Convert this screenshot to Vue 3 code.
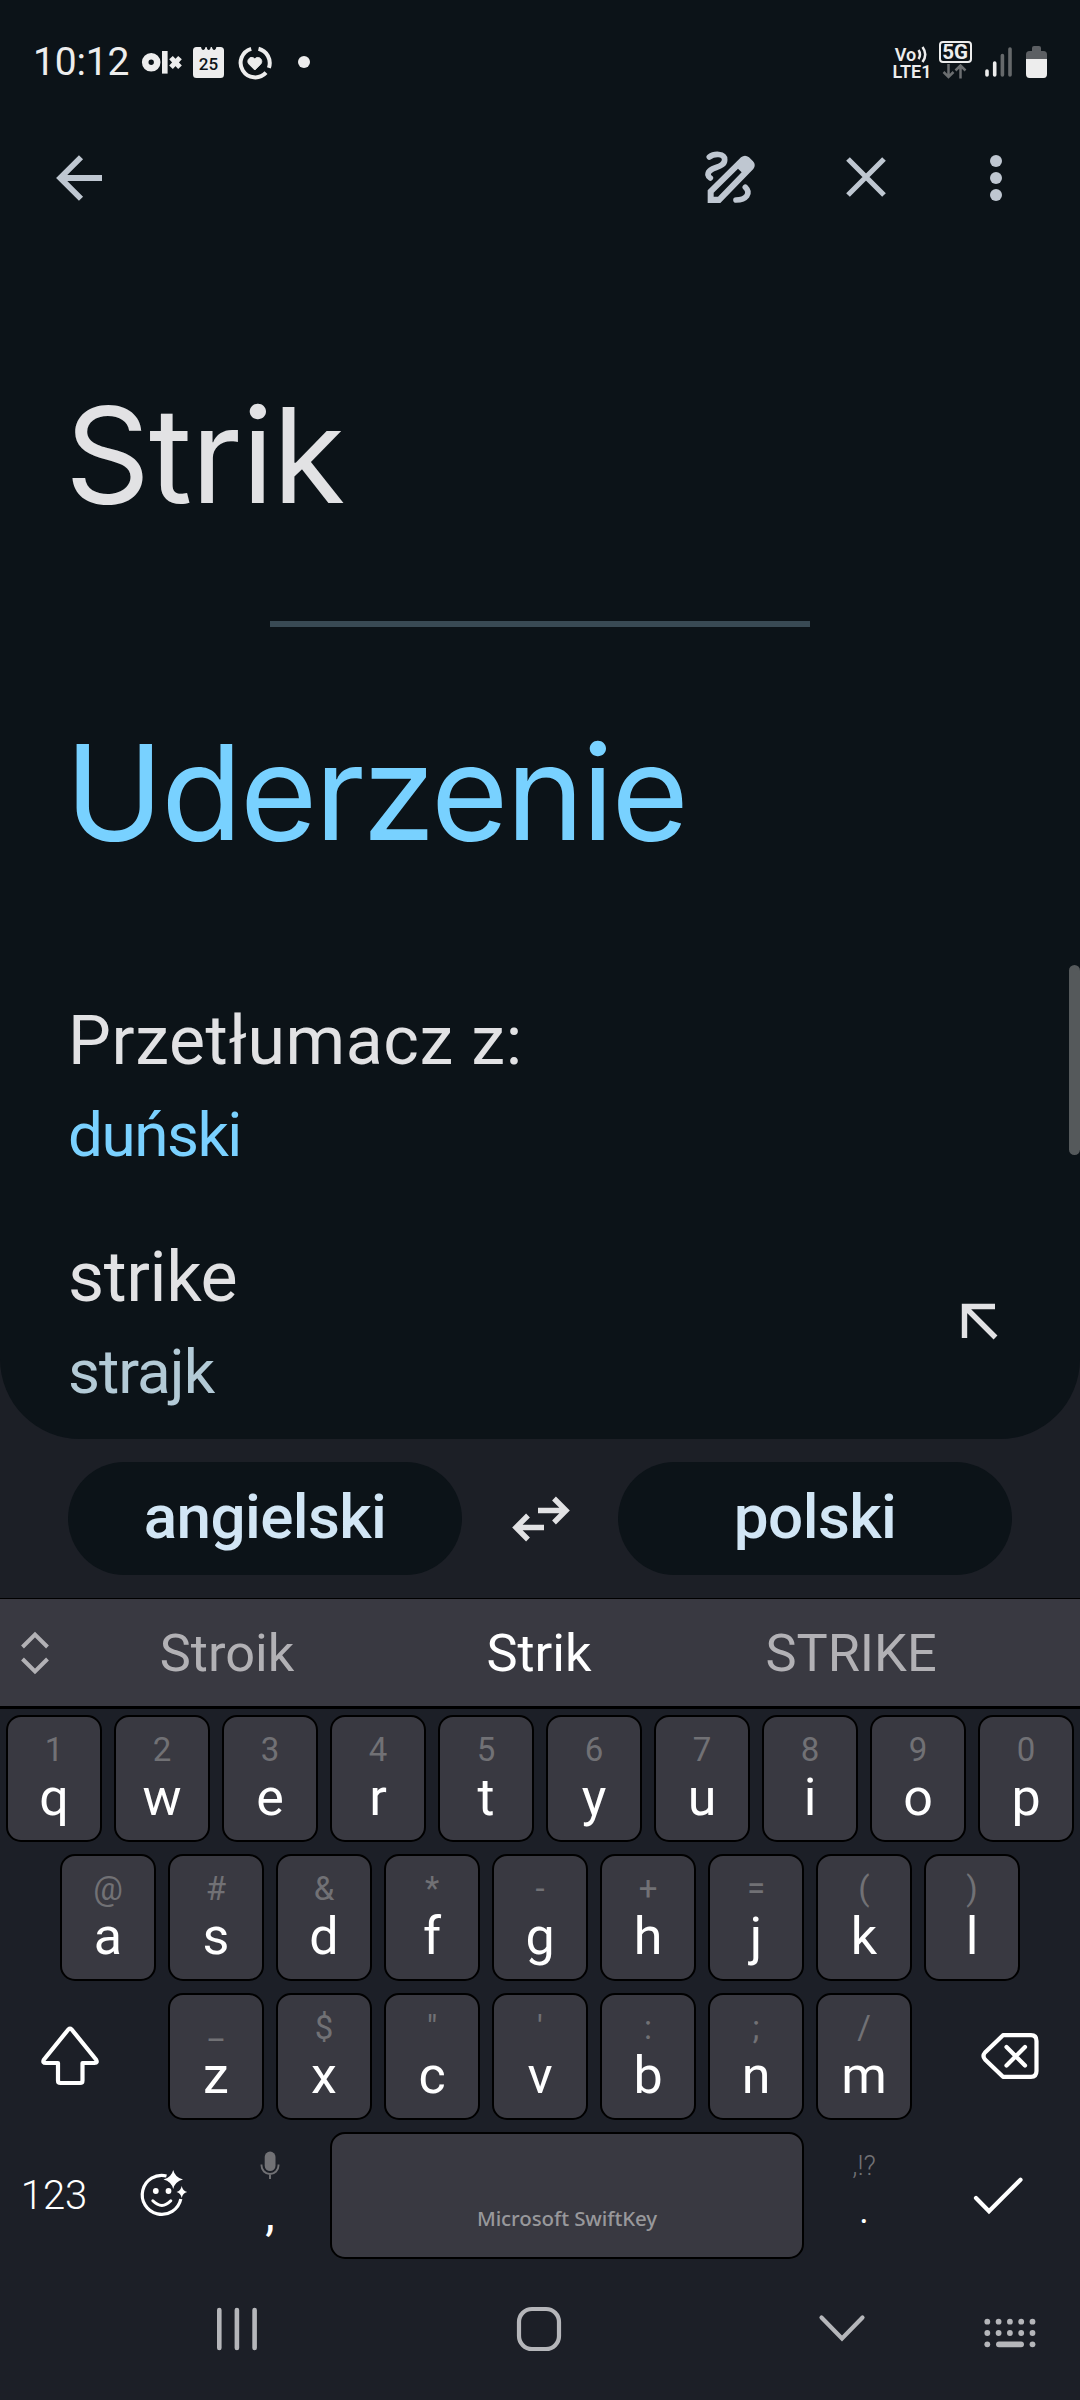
<script setup>
const rows = [
  [['1', 'q'], ['2', 'w'], ['3', 'e'], ['4', 'r'], ['5', 't'], ['6', 'y'], ['7', 'u'], ['8', 'i'], ['9', 'o'], ['0', 'p']],
  [['@', 'a'], ['#', 's'], ['&', 'd'], ['*', 'f'], ['-', 'g'], ['+', 'h'], ['=', 'j'], ['(', 'k'], [')', 'l']],
]
const lastRow = [['_', 'z'], ['$', 'x'], ['"', 'c'], ["'", 'v'], [':', 'b'], [';', 'n'], ['/', 'm']]
const dots = [0, 1, 2, 3, 4]
</script>

<template>
  <div class="screen">
    <main class="panel">
      <header class="status">
        <span class="time">10:12</span>
        <svg class="olx" width="42" height="26" viewBox="141 49 42 26">
          <circle cx="151.2" cy="62.3" r="6" fill="none" stroke="#ededed" stroke-width="6.6" />
          <rect x="162" y="51" width="5.6" height="22.6" fill="#ededed" />
          <path d="M171 57.600l9 9.600m0-9.600l-9 9.600" stroke="#ededed" stroke-width="5" />
        </svg>
        <div class="calendar">
          <svg width="31" height="31" viewBox="0 0 31 31">
            <path d="M3.500 0H8l.6 2q1.600 2.200 3.200 0L12.600 0h1l.6 2q1.500 2.200 3 0l.6-2h1l.8 2q1.500 2.200 3.100 0l.7-2h4.100Q31 0 31 3.500V27.500Q31 31 27.500 31h-24Q0 31 0 27.500V3.500Q0 0 3.500 0z" fill="#ededed" />
          </svg>
          <span>25</span>
        </div>
        <svg class="ring" width="36" height="36" viewBox="237.500 44.500 36 36">
          <path d="M251.700 48.300A14.600 14.600 0 1 0 266.500 72.200M259 48.300A14.600 14.600 0 0 1 269.400 67.300" fill="none" stroke="#ededed" stroke-width="4" />
          <path d="M255.300 69.500l-5.800-5.800c-3.500-3.700 1.700-9.500 5.800-5.300 4.100-4.200 9.300 1.600 5.800 5.300z" fill="#ededed" stroke="#ededed" />
        </svg>
        <svg class="more-dot" width="14" height="14" viewBox="0 0 14 14"><circle cx="7" cy="7" r="6" fill="#ededed" /></svg>
        <span class="grow"></span>
        <div class="volte">
          <div class="vo">Vo<svg width="11" height="17" viewBox="0 0 11 17"><path d="M1.500 4q3 4.500 0 9M5.500 1q5.500 7.500 0 15" fill="none" stroke="#ededed" stroke-width="2.500" /></svg></div>
          <div class="lte">LTE1</div>
        </div>
        <div class="net">
          <div class="five">5G</div>
          <svg width="26" height="15" viewBox="0 0 26 15"><path d="M6.500 0v12.500M1.500 8l5 5 5-5M18.500 14.500V2M13.500 6.500l5-5 5 5" fill="none" stroke="#6b6e70" stroke-width="2.500" /></svg>
        </div>
        <svg class="signal" width="28" height="30" viewBox="985 47 28 30">
          <g stroke-width="3.600" stroke-linecap="round">
            <path d="M987 71v4M994.700 63v12" stroke="#ededed" />
            <path d="M1002.400 55.500v19.500M1010 49v26" stroke="#66696b" />
          </g>
        </svg>
        <svg width="21" height="32" viewBox="0 0 21 32">
          <path d="M6 5V2Q6 0 8 0h5q2 0 2 2v3h2.500Q21 5 21 8.500V13H0V8.500Q0 5 3.500 5z" fill="#5c5f63" />
          <path d="M0 13h21v15q0 4-3.500 4h-14Q0 32 0 28z" fill="#ededed" />
        </svg>
      </header>

      <nav class="appbar">
        <svg width="52" height="52" viewBox="54 152 52 52">
          <path d="M102 178H61M81 157.200L60.200 178 81 198.800" fill="none" stroke="#bfc7d1" stroke-width="5.800" />
        </svg>
        <span class="grow"></span>
        <svg class="pen" width="54" height="54" viewBox="130 390 162 162">
          <path fill="#bfc7d1" fill-rule="evenodd" d="M141 549V511L241 412Q253 402 265 412L277 424Q287 435 278 447L179 549zM159 530H172L243 457L232 446L159 518z" />
          <path d="M146 411C160 400 192 399 192 419C192 447 142 438 142 464Q143 470 149 474" fill="none" stroke="#bfc7d1" stroke-width="17" stroke-linecap="round" />
          <path d="M254 502C272 520 257 540 226 540" fill="none" stroke="#bfc7d1" stroke-width="17" stroke-linecap="round" />
        </svg>
        <svg class="close" width="44" height="44" viewBox="0 0 44 44"><path d="M4 4l36 36M40 4L4 40" stroke="#bfc7d1" stroke-width="5.200" /></svg>
        <svg width="16" height="50" viewBox="0 0 16 50"><g fill="#bfc7d1"><circle cx="8" cy="8" r="6" /><circle cx="8" cy="25" r="6" /><circle cx="8" cy="42" r="6" /></g></svg>
      </nav>

      <h1 class="source">Strik</h1>
      <div class="rule"></div>
      <h1 class="result">Uderzenie</h1>

      <div class="label">Przetłumacz z:</div>
      <div class="detected">duński</div>
      <div class="suggestion">
        <div>
          <div class="word">strike</div>
          <div class="meaning">strajk</div>
        </div>
        <svg width="38" height="38" viewBox="0 0 38 38"><path d="M4.500 36V4.500H35M5 5l30.500 30.500" fill="none" stroke="#e2e2e4" stroke-width="5.400" /></svg>
      </div>
      <i class="thumb"></i>
    </main>

    <section class="langs">
      <button class="pill from">angielski</button>
      <svg width="60" height="50" viewBox="510 1494 60 50">
        <g fill="none" stroke="#e2e2e4" stroke-width="5.400">
          <path d="M538 1510.500H565M554 1498.500l12 12-12 12" />
          <path d="M544 1527.500H517M528 1515.500l-12 12 12 12" />
        </g>
      </svg>
      <button class="pill to">polski</button>
    </section>

    <section class="candidates">
      <svg width="32" height="44" viewBox="0 0 32 44"><path d="M3.500 16L16 3.500 28.500 16M3.500 28L16 40.500 28.500 28" fill="none" stroke="#b2b1b5" stroke-width="4" /></svg>
      <span>Stroik</span><span class="main">Strik</span><span>STRIKE</span>
    </section>

    <section class="keyboard">
      <div v-for="(row, i) in rows" :key="i" class="row">
        <div v-for="k in row" :key="k[1]" class="key"><span class="hint">{{ k[0] }}</span><span class="char">{{ k[1] }}</span></div>
      </div>
      <div class="row third">
        <svg class="shift" width="62" height="62" viewBox="39 2025 62 62">
          <path d="M68.300 2029.500Q70 2028 71.700 2029.500L96 2059.500Q98 2063 94.500 2063H82.500V2080.500Q82.500 2083 80 2083H60.500Q58 2083 58 2080.500V2063H46Q42 2063 44 2059.500Z" fill="none" stroke="#fff" stroke-width="4.200" stroke-linejoin="round" />
        </svg>
        <div class="keys">
          <div v-for="k in lastRow" :key="k[1]" class="key"><span class="hint">{{ k[0] }}</span><span class="char">{{ k[1] }}</span></div>
        </div>
        <svg class="erase" width="60" height="50" viewBox="980 2031 60 50">
          <path d="M1003 2035.200H1031Q1036.500 2035.200 1036.500 2041V2071Q1036.500 2076.800 1031 2076.800H1003L985 2059.500Q982 2056 985 2052.500Z" fill="none" stroke="#fff" stroke-width="4.200" stroke-linejoin="round" />
          <path d="M1006.500 2047l18.500 18.500M1025 2047l-18.500 18.500" stroke="#fff" stroke-width="4.200" stroke-linecap="round" />
        </svg>
      </div>
      <div class="row bottom">
        <div class="num">123</div>
        <svg class="emoji" width="50" height="50" viewBox="139 2169 50 50">
          <path d="M166.500 2176A19.500 19.500 0 1 0 180.800 2199" fill="none" stroke="#fff" stroke-width="3.200" />
          <circle cx="155.800" cy="2191" r="2.900" fill="#fff" /><circle cx="168.500" cy="2191" r="2.900" fill="#fff" />
          <path d="M152.800 2200.800Q162 2210 170.800 2200.800" fill="none" stroke="#fff" stroke-width="3" stroke-linecap="round" />
          <path d="M173.200 2170Q175 2177.500 183 2179.500Q175 2181.500 173.200 2189Q171.400 2181.500 163.500 2179.500Q171.400 2177.500 173.200 2170ZM181.700 2186Q182.700 2191 187.200 2192Q182.700 2193 181.700 2198Q180.700 2193 176.500 2192Q180.700 2191 181.700 2186Z" fill="#fff" />
        </svg>
        <div class="comma">
          <svg width="20" height="28" viewBox="260 2151 20 28">
            <rect x="264.700" y="2151.600" width="10.800" height="19.500" rx="5.400" fill="#717175" />
            <path d="M261.500 2164.500v1a8.500 8.500 0 0 0 17 0v-1M270 2174v5" fill="none" stroke="#717175" stroke-width="1.900" />
          </svg>
          <span>,</span>
        </div>
        <div class="space">Microsoft SwiftKey</div>
        <div class="period"><small>,!?</small><span>.</span></div>
        <svg class="check" width="54" height="42" viewBox="972 2176 54 42"><path d="M976 2199l13 13.200 31.500-31.500" fill="none" stroke="#fff" stroke-width="4.200" stroke-linecap="round" /></svg>
      </div>
    </section>

    <footer class="navbar">
      <svg class="recents" width="42" height="44" viewBox="216 2307 42 44"><path d="M219.300 2310v38M236.900 2310v38M254.600 2310v38" stroke="#b5b6ba" stroke-width="4.600" stroke-linecap="round" /></svg>
      <svg class="home" width="46" height="46" viewBox="0 0 46 46"><rect x="3" y="3" width="40" height="40" rx="13" fill="none" stroke="#b5b6ba" stroke-width="4.200" /></svg>
      <svg class="down" width="50" height="30" viewBox="817 2313 50 30"><path d="M821.500 2317.500l20.500 21 20.500-21" fill="none" stroke="#b5b6ba" stroke-width="4.200" stroke-linecap="round" /></svg>
      <svg class="kb" width="54" height="32" viewBox="983 2317 54 32">
        <g fill="#b5b6ba">
          <template v-for="d in dots" :key="d">
            <circle :cx="987.300 + d * 11.300" cy="2321.700" r="2.900" />
            <circle :cx="987.300 + d * 11.300" cy="2333" r="2.900" />
          </template>
          <circle cx="987.300" cy="2344.300" r="2.900" /><circle cx="1032.500" cy="2344.300" r="2.900" />
          <rect x="996" y="2341.400" width="28" height="5.800" rx="2.900" />
        </g>
      </svg>
    </footer>
  </div>
</template>

<style>
body { margin: 0; background: #1c1f27; }
</style>

<style scoped>
.screen {
  width: 1080px;
  height: 2400px;
  overflow: hidden;
  background: #1c1f26;
  font-family: Roboto, "Noto Sans", sans-serif;
  color: #e2e2e4;
}
svg { display: block; flex: none; }
.grow { flex: 1; }
.panel {
  position: relative;
  box-sizing: border-box;
  height: 1439px;
  background: #0c1318;
  border-radius: 0 0 80px 80px;
}
.status {
  display: flex;
  align-items: center;
  box-sizing: border-box;
  height: 123px;
  padding: 0 33px 0 33px;
  color: #ededed;
}
.time { width: 108px; font-size: 39px; line-height: 46px; letter-spacing: -0.2px; white-space: nowrap; }
.calendar { position: relative; margin-left: 10px; margin-top: 2px; }
.calendar span { position: absolute; left: 0; top: 7px; width: 31px; text-align: center; font-size: 17px; line-height: 20px; font-weight: 500; color: #0c1318; }
.ring { margin-left: 13px; margin-top: 2px; }
.more-dot { margin-left: 24px; margin-top: 1px; }
.volte { width: 40px; margin-top: 2px; font-weight: 600; font-size: 18px; line-height: 17px; text-align: center; }
.vo { display: flex; justify-content: center; gap: 1px; padding-right: 1px; height: 17px; }
.net { display: flex; flex-direction: column; align-items: center; width: 34px; margin: 0 13px 0 6px; padding-bottom: 3px; }
.five { box-sizing: border-box; width: 33px; height: 22px; border: 2px solid #ededed; border-radius: 4px; font-size: 20.500px; line-height: 19px; font-weight: 700; text-align: center; }
.net svg { margin-top: 1px; }
.signal { margin-right: 13px; }
.appbar { display: flex; align-items: center; height: 110px; padding: 0 76px 0 54px; }
.close { margin: 0 100px 2px 86px; }
.pen { margin-bottom: 2px; }
h1 { margin: 0 0 0 65px; font: 400 132.500px/160px Inter, Roboto, sans-serif; }
.source { margin-top: 142px; letter-spacing: -1.200px; }
.rule { width: 540px; height: 6px; margin: 86px auto 85px; background: #394a54; }
.result { color: #78d1ff; letter-spacing: -2.400px; }
.label { margin: 129px 0 0 68px; font-size: 68px; line-height: 80px; letter-spacing: 0.600px; }
.detected { margin: 14px 0 0 68px; font-size: 62px; line-height: 80px; color: #7ad1ff; letter-spacing: -1.500px; }
.suggestion { display: flex; justify-content: space-between; align-items: center; margin: 62px 82px 0 68px; }
.suggestion svg { margin-bottom: 7px; }
.word { font-size: 70px; line-height: 80px; letter-spacing: -0.400px; }
.meaning { margin-top: 15px; font-size: 62px; line-height: 80px; color: #b3cad6; letter-spacing: -1px; }
.thumb { position: absolute; right: 0; top: 965px; width: 11px; height: 190px; border-radius: 6px; background: #55595b; }
.langs { display: flex; justify-content: space-between; align-items: center; box-sizing: border-box; height: 159px; padding: 0 68px; }
.pill { width: 394px; height: 113px; padding: 0 0 3px; border: 0; border-radius: 57px; background: #0c1318; color: #d2e6f5; font: 500 62px/80px Roboto, sans-serif; letter-spacing: -0.600px; }
.candidates { display: flex; align-items: center; box-sizing: border-box; height: 111px; padding: 1px 0 0 19px; border-top: 1px solid #000; border-bottom: 3px solid #000; background: #393941; color: #b2b1b5; font-size: 52.300px; line-height: 60px; }
.candidates span { width: 312px; text-align: center; }
.candidates svg + span { margin-left: 20px; }
.candidates .main { color: #fff; }
.keyboard { background: #1c1f27; }
.row { display: flex; justify-content: center; height: 139px; }
.key { display: flex; flex-direction: column; align-items: center; box-sizing: border-box; width: 96px; height: 127px; margin: 6px; padding-top: 13px; border: 2px solid #000; border-radius: 15px; background: #393941; }
.hint { font-size: 33px; line-height: 40px; color: #717175; }
.char { font-size: 52px; line-height: 55px; color: #fff; }
.third { align-items: center; justify-content: space-between; }
.keys { display: flex; width: 756px; margin-left: 61px; }
.shift { margin-left: 39px; margin-bottom: 1px; }
.erase { margin-left: auto; margin-right: 40px; margin-bottom: 2px; }
.bottom { display: grid; grid-template-columns: 108px 108px 108px 486px 108px 162px; align-items: center; justify-items: center; color: #fff; }
.num { font-size: 40px; line-height: 48px; font-weight: 300; padding-top: 1px; }
.emoji { margin-left: 4px; margin-bottom: 3px; }
.comma, .period { display: flex; flex-direction: column; align-items: center; height: 127px; }
.comma svg { margin-top: 19px; }
.comma span { font-size: 48px; line-height: 54px; margin-top: 8px; font-weight: 400; }
.period small { margin-top: 16px; font-size: 27px; line-height: 36px; font-weight: 300; color: #717175; }
.period span { margin-top: 9px; font-size: 36px; line-height: 36px; font-weight: 400; }
.space { display: flex; justify-content: center; align-items: flex-end; box-sizing: border-box; width: 474px; height: 127px; padding-bottom: 25px; border: 2px solid #000; border-radius: 15px; background: #393941; color: #98989b; font: 500 20.500px/28px "Noto Sans", sans-serif; letter-spacing: -0.100px; }
.navbar { display: flex; align-items: center; height: 135px; background: #1c1f27; }
.recents { margin: 0 0 7px 216px; }
.home { margin: 0 0 7px 258px; }
.down { margin: 0 0 9px 255px; }
.kb { margin-left: 116px; }
</style>
